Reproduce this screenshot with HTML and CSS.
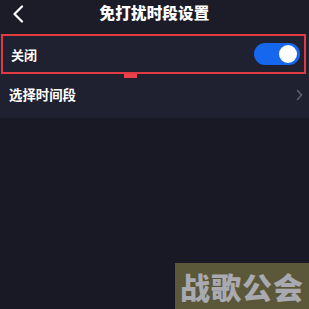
FILE: index.html
```html
<!DOCTYPE html>
<html lang="zh">
<head>
<meta charset="utf-8">
<link rel="stylesheet" href="styles.css">
</head>
<body>
<div class="page">
  <header class="topbar">
    <svg class="back" width="12" height="18" viewBox="0 0 12 18"><path d="M10 1.5 L2.5 9 L10 16.5" fill="none" stroke="#fff" stroke-width="2.2" stroke-linecap="round" stroke-linejoin="round"/></svg>
    <h1 class="title">免打扰时段设置</h1>
  </header>
  <section class="list">
    <div class="row row-switch">
      <span class="label">关闭</span>
      <span class="switch"><span class="knob"></span></span>
      <span class="tab"></span>
    </div>
    <div class="row row-link">
      <span class="label">选择时间段</span>
      <svg class="chev" width="7" height="12" viewBox="0 0 7 12"><path d="M1.5 1.5 L5.5 6 L1.5 10.5" fill="none" stroke="#5d6070" stroke-width="1.6" stroke-linecap="round" stroke-linejoin="round"/></svg>
    </div>
  </section>
  <div class="watermark">战歌公会</div>
</div>
</body>
</html>
```
FILE: styles.css
```css
html, body {
  margin: 0;
  padding: 0;
  background: #181925;
}
.page {
  position: relative;
  width: 309px;
  height: 309px;
  overflow: hidden;
  font-family: "Noto Sans CJK SC", "Noto Sans", sans-serif;
  color: #fff;
}
.topbar {
  height: 34px;
  background: #1b1c28;
  display: flex;
  align-items: center;
  justify-content: center;
  position: relative;
}
.back {
  position: absolute;
  left: 12px;
  top: 5px;
}
.title {
  margin: 0;
  font-size: 15.5px;
  font-weight: 900;
  line-height: 1;
  margin-top: -8px;
  letter-spacing: 0.2px;
}
.list {
  background: #1f2130;
}
.row {
  display: flex;
  align-items: center;
  justify-content: space-between;
  box-sizing: border-box;
}
.label {
  font-size: 13px;
  font-weight: 700;
  line-height: 1;
}
.row-switch {
  position: relative;
  height: 40px;
  margin: 0 3px 0 1px;
  border: 2px solid #e23a42;
  padding: 0 4px 0 8px;
}
.switch {
  width: 46px;
  height: 22px;
  border-radius: 11px;
  background: #1766ee;
  display: flex;
  align-items: center;
  justify-content: flex-end;
  padding-right: 3px;
  box-sizing: border-box;
}
.knob {
  width: 18px;
  height: 18px;
  border-radius: 50%;
  background: #fff;
}
.tab {
  position: absolute;
  left: 121px;
  bottom: -6px;
  width: 13px;
  height: 4px;
  background: #e8424a;
}
.row-link {
  height: 44px;
  padding: 0 6px 0 9px;
}
.row-link .label {
  font-size: 13.4px;
  margin-top: -2px;
}
.chev {
  margin-top: -2px;
}
.watermark {
  position: absolute;
  left: 175px;
  top: 263px;
  right: 0;
  bottom: 0;
  background: #5b5839;
  color: #a9a9b1;
  font-size: 30px;
  font-weight: 900;
  line-height: 46px;
  padding-left: 5px;
  letter-spacing: 1px;
  white-space: nowrap;
}
```
